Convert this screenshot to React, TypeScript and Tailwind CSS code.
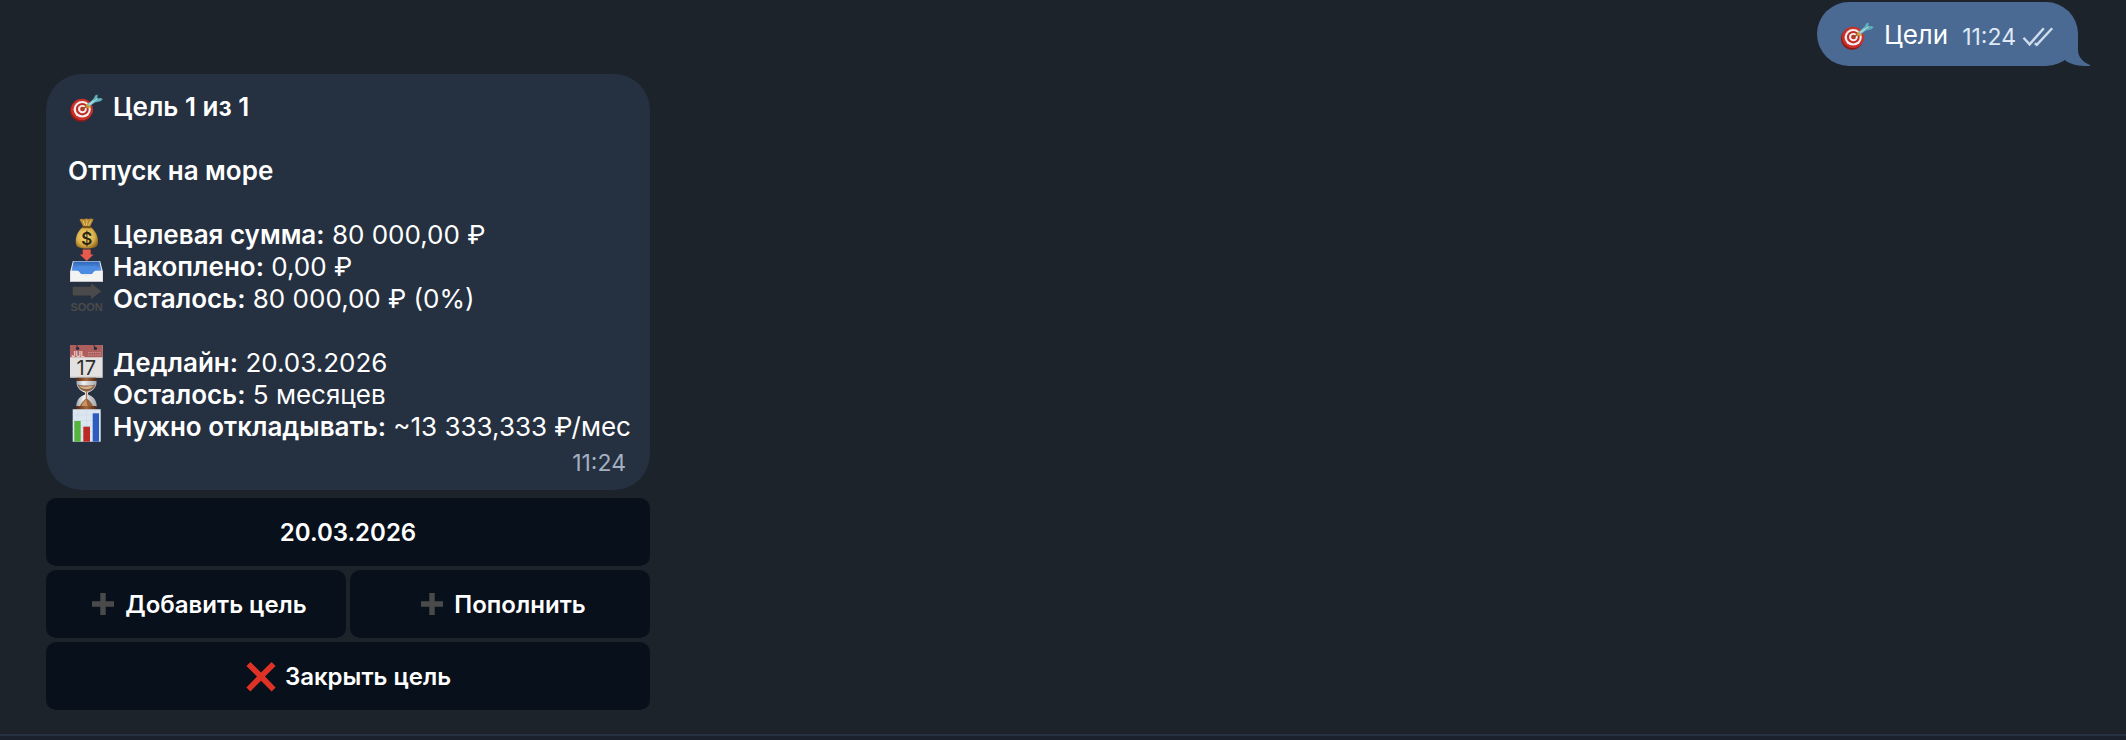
import type { ReactNode } from "react";

const glyph = "h-8 w-9 shrink-0 overflow-visible";

function TargetIcon() {
  return (
    <svg className={glyph} viewBox="0 0 36 32" aria-hidden="true">
      <ellipse cx="13" cy="19.8" rx="11" ry="11" fill="#8f1a16" />
      <ellipse cx="14" cy="18.4" rx="11" ry="10.6" fill="#c9302a" />
      <ellipse cx="14.2" cy="18.3" rx="8.6" ry="8.3" fill="#f4efee" />
      <ellipse cx="14.3" cy="18.2" rx="6.4" ry="6.2" fill="#c22c27" />
      <ellipse cx="14.4" cy="18.1" rx="4.4" ry="4.2" fill="#f4efee" />
      <ellipse cx="14.5" cy="18" rx="2.4" ry="2.3" fill="#b9322b" />
      <path d="M14.5 18.2L21 13.6" stroke="#8a5a1c" strokeWidth="1.3" />
      <path d="M17.6 14.8l2.6 2.6 3-1.6-3.6-3.6z" fill="#d99b2b" />
      <path d="M19.4 13.2l6-5.2 2.6 2.6-6.6 4.8z" fill="#7cc4cc" />
      <path d="M25 8.6l2.4-4.4 2.2-.6-.2 4 3.400-.6 2 1.200-2.400 2-5.400 1.400z" fill="#5eafb8" />
      <path d="M21 13.6l8.6-6" stroke="#b8e6e8" strokeWidth=".9" />
    </svg>
  );
}

function MoneyBagIcon() {
  return (
    <svg className={glyph} viewBox="0 0 36 32" aria-hidden="true">
      <defs>
        <radialGradient id="bag" cx=".45" cy=".45" r=".6">
          <stop offset="0" stopColor="#f6dc7c" />
          <stop offset=".65" stopColor="#d9b04a" />
          <stop offset="1" stopColor="#94691f" />
        </radialGradient>
      </defs>
      <path d="M11.5.4c2.6-1.6 4 .6 5.6-.6 1.8-1.2 2.6.8 4.4 0 1.7-.6 2.8-.2 4 .8l-3.6 7.4h-6.4z" fill="#b98a35" />
      <path d="M15 1.5l2 5M19 1l-.4 5.5M23 1.5l-2.6 5" stroke="#e9c766" strokeWidth="1" />
      <path d="M15 8h7.5c4.5 3 7.5 9 7.5 14.5 0 5-2.5 7-11.3 7S7.7 27.5 7.7 22.5C7.7 17 10.5 11 15 8z" fill="url(#bag)" />
      <rect x="14.2" y="7" width="9" height="2.2" rx="1" fill="#7a521b" />
      <text x="18.9" y="26" textAnchor="middle" fontFamily="Inter, sans-serif" fontSize="17" fontWeight="600" fill="#2b2410">$</text>
    </svg>
  );
}

function InboxIcon() {
  return (
    <svg className={glyph} viewBox="0 0 36 32" aria-hidden="true">
      <defs>
        <linearGradient id="tray" x1="0" y1="0" x2="0" y2="1">
          <stop offset="0" stopColor="#2f66b8" />
          <stop offset="1" stopColor="#5b9bee" />
        </linearGradient>
      </defs>
      <path d="M4.8 10h27.4L34.7 20v11H2.3V20z" fill="#e9e9ea" />
      <path d="M5.6 10.6h25.8l2 9.4H3.600z" fill="url(#tray)" />
      <path d="M9 15h19l2 8H7z" fill="#4c8be2" />
      <path d="M2.3 19.8h6.4c1.6 0 2.3.6 3.3 2 1.6 2.2 3 3.2 6.5 3.2s5-1 6.5-3.2c1-1.4 1.7-2 3.3-2h6.4V31H2.3z" fill="#f3f3f1" />
      <path d="M2.3 30.5h32.4" stroke="#bfc3c8" />
      <path d="M14.7-1.6h8v5.2h2.900L18.700 10l-6.900-6.400h2.900z" fill="#e75a4d" />
    </svg>
  );
}

function SoonIcon() {
  return (
    <svg className={glyph} viewBox="0 0 36 32" aria-hidden="true">
      <path d="M4.7 3.8H23V.2l10.3 8L23 16.2v-3.7H4.7z" fill="#4a4a4a" />
      <text x="18.6" y="28" textAnchor="middle" fontFamily="'Liberation Sans', sans-serif" fontSize="11" fontWeight="700" fill="#4a4a4a">SOON</text>
    </svg>
  );
}

function CalendarIcon() {
  return (
    <svg className={glyph} viewBox="0 0 36 32" aria-hidden="true">
      <rect x="2" y="-2" width="32.7" height="32.7" rx=".6" fill="#e2e1df" />
      <path d="M2-2h32.7v12.3H2z" fill="#ad5f5e" />
      <path d="M2 29.7h32.7v1H2z" fill="#b9b9b9" />
      <circle cx="9.6" cy="1.4" r="1.7" fill="#26303f" />
      <circle cx="27.4" cy="1.4" r="1.7" fill="#26303f" />
      <path d="M8.6-2l1 3M25.6-2l1.8 3" stroke="#3a2f38" />
      <path d="M20 5.5h13M20 8h13" stroke="#c98f8c" strokeWidth="1.2" strokeDasharray="1.5 .8" />
      <text x="3.6" y="9.6" fontFamily="Inter, sans-serif" fontSize="7" fontWeight="700" fill="#ecd3d1">JUL</text>
      <text x="18.3" y="28.4" textAnchor="middle" fontFamily="Inter, sans-serif" fontSize="20" fontWeight="400" fill="#2f2f2f">17</text>
    </svg>
  );
}

function HourglassIcon() {
  return (
    <svg className={glyph} viewBox="0 0 36 32" aria-hidden="true">
      <defs>
        <linearGradient id="wood" x1="0" x2="1" y1="0" y2="0">
          <stop offset="0" stopColor="#4a2412" />
          <stop offset=".5" stopColor="#a5673c" />
          <stop offset="1" stopColor="#4a2412" />
        </linearGradient>
        <linearGradient id="glass" x1="0" x2="1" y1="0" y2="0">
          <stop offset="0" stopColor="#9ba3ac" />
          <stop offset=".35" stopColor="#eef0f1" />
          <stop offset="1" stopColor="#a3a6aa" />
        </linearGradient>
      </defs>
      <path d="M8.5 1.5h20c.6 6-2.5 10-8.5 12.300v1.800c6 2.200 9 6.400 8.700 12.400H8.300C8 22 11 17.800 17 15.600v-1.800C11 11.500 8 7.500 8.500 1.500z" fill="url(#glass)" />
      <path d="M9.8 5.400c5 1.400 12.600 1.400 17.400 0-.8 4-3.200 5.800-7.800 7.200h-2C13 11.200 10.600 9.200 9.800 5.400z" fill="#8d6648" />
      <path d="M11 6.800c4 1.200 10 1.200 14.400-.2-1.400 2.600-3.600 3.600-7 3.400-3.600-.2-6-1-7.400-3.200z" fill="#d7b08c" />
      <path d="M18.500 12v9" stroke="#a87850" strokeWidth="1.200" />
      <path d="M18.500 19.500c2.500 1.200 5.600 4.500 7 8.500h-14c1.400-4 4.500-7.300 7-8.500z" fill="#98633b" />
      <path d="M18 20.500c-2 1.500-3.600 4-4.400 6.500h6z" fill="#c99465" />
      <rect x="7.400" y="-1.300" width="21.800" height="3.200" rx="1.600" fill="url(#wood)" />
      <rect x="7.400" y="27" width="21.800" height="3.600" rx="1.800" fill="url(#wood)" />
    </svg>
  );
}

function ChartIcon() {
  return (
    <svg className={glyph} viewBox="0 0 36 32" aria-hidden="true">
      <path d="M4.700-1.700h28v32.400h-28z" fill="#dce6f1" />
      <path d="M4.700 4h28M4.700 9.500h28M4.700 15h28M4.700 20.500h28M4.700 26h28M10-1.700v32.400M18.500-1.700v32.400M27-1.700v32.400" stroke="#cad8e6" strokeWidth=".6" />
      <path d="M6.300 10h6.400v20.700H6.300z" fill="#55b43b" />
      <path d="M15.300 15.700H22v15h-6.700z" fill="#bb2a24" />
      <path d="M24.700 2.300H31v28.400h-6.300z" fill="#2c5cbe" />
    </svg>
  );
}

function PlusIcon() {
  return (
    <svg className="size-8 shrink-0" viewBox="0 0 32 32" aria-hidden="true">
      <path d="M15.300 5h5.400v8.300H29v5.400h-8.300V27h-5.400v-8.300H7v-5.400h8.300z" fill="#4a4a4a" />
    </svg>
  );
}

function CrossIcon() {
  return (
    <svg className="size-8 shrink-0" viewBox="0 0 32 32" aria-hidden="true">
      <path d="M5.400 2L16 12.400 26.600 2l4 4L20 16.600l10.600 10.800-4 4L16 20.800 5.400 31.400l-4-4L12 16.600 1.400 6z" fill="#de3226" />
    </svg>
  );
}

function ReadIcon() {
  return (
    <svg className="h-5 w-8 shrink-0" viewBox="0 0 32 20" role="img" aria-label="Прочитано" fill="none" stroke="#cfdcec" strokeWidth="2.4">
      <path d="M1.500 10.800L7.600 17.400 21.800 1.200" />
      <path d="M12.800 16.200l2 1.600L30.200 1.200" />
    </svg>
  );
}

function Row({ icon, label, children }: { icon: ReactNode; label: string; children?: ReactNode }) {
  return (
    <div className="flex h-8 gap-[9px]">
      {icon}
      <p>
        <strong className="font-semibold">{label}</strong> {children}
      </p>
    </div>
  );
}

function KeyboardButton({ icon, children }: { icon?: ReactNode; children: ReactNode }) {
  return (
    <button
      type="button"
      className="flex h-[68px] flex-1 items-center justify-center gap-2 rounded-[10px] bg-[#08101b] text-2xl font-semibold text-white"
    >
      {icon}
      <span className="pt-0.5">{children}</span>
    </button>
  );
}

export default function App() {
  return (
    <div className="flex min-h-screen flex-col bg-[#1c232b] font-['Inter',sans-serif] text-[26px] leading-8 text-white">
      <main className="flex flex-1 flex-col gap-2 pt-0.5 pr-12 pb-6 pl-[46px]">
        <article className="relative flex h-16 items-center gap-3.5 self-end rounded-[32px] bg-[#4a6a94] pr-6 pl-[22px]">
          <div className="flex gap-[9px] pt-0.5">
            <TargetIcon />
            <p>Цели</p>
          </div>
          <div className="flex items-center gap-1.5 pt-1.5 text-[23px] text-[#dfe9f5]">
            <time>11:24</time>
            <ReadIcon />
          </div>
          <svg className="absolute -right-3 bottom-0 h-8 w-12" viewBox="0 0 48 32" aria-hidden="true">
            <path d="M36 0v16c0 7 5 12 12 15v1c-11 .4-20-1.500-26-6.500z" fill="#4a6a94" />
          </svg>
        </article>

        <section className="flex w-[604px] max-w-full flex-col gap-2">
          <article className="rounded-[36px] bg-[#253040] px-[22px] pt-[17px] pb-[11px] whitespace-nowrap">
            <div className="flex flex-col gap-8">
              <Row icon={<TargetIcon />} label="Цель 1 из 1" />
              <h2 className="font-semibold">Отпуск на море</h2>
              <div>
                <Row icon={<MoneyBagIcon />} label="Целевая сумма:">80 000,00 ₽</Row>
                <Row icon={<InboxIcon />} label="Накоплено:">0,00 ₽</Row>
                <Row icon={<SoonIcon />} label="Осталось:">80 000,00 ₽ (0%)</Row>
              </div>
              <div>
                <Row icon={<CalendarIcon />} label="Дедлайн:">20.03.2026</Row>
                <Row icon={<HourglassIcon />} label="Осталось:">5 месяцев</Row>
                <Row icon={<ChartIcon />} label="Нужно откладывать:">~13 333,333 ₽/мес</Row>
              </div>
            </div>
            <time className="mt-1 block pr-0.5 text-right text-[23px] text-[#a3b0c2]">11:24</time>
          </article>

          <div className="flex flex-col gap-1">
            <div className="flex gap-1">
              <KeyboardButton>20.03.2026</KeyboardButton>
            </div>
            <div className="grid grid-cols-2 gap-1">
              <KeyboardButton icon={<PlusIcon />}>Добавить цель</KeyboardButton>
              <KeyboardButton icon={<PlusIcon />}>Пополнить</KeyboardButton>
            </div>
            <div className="flex gap-1">
              <KeyboardButton icon={<CrossIcon />}>Закрыть цель</KeyboardButton>
            </div>
          </div>
        </section>
      </main>
      <footer className="h-1.5 border-t-2 border-[#253040] bg-[#1b222d]" />
    </div>
  );
}
